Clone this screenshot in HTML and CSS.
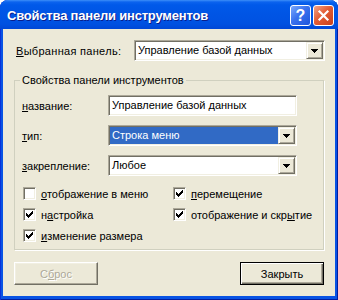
FILE: index.html
```html
<!DOCTYPE html>
<html lang="ru">
<head>
<meta charset="utf-8">
<title>Свойства панели инструментов</title>
<link rel="stylesheet" href="styles.css">
</head>
<body>
<div class="window">
  <div class="titlebar">
    <span class="title">Свойства панели инструментов</span>
    <span class="tb-btn tb-help">?</span>
    <span class="tb-btn tb-close">
      <svg width="13" height="13" viewBox="0 0 13 13"><path d="M2.5 2.5 L10.5 10.5 M10.5 2.5 L2.5 10.5" stroke="#fff" stroke-width="2.2" stroke-linecap="square"/></svg>
    </span>
  </div>
  <div class="client">
    <div class="top-row">
      <span class="top-label"><u>В</u>ыбранная панель:</span>
      <div class="combo wide">
        <span class="combo-text">Управление базой данных</span>
        <span class="drop"><svg width="7" height="4" viewBox="0 0 7 4" shape-rendering="crispEdges"><rect x="0" y="0" width="7" height="1"/><rect x="1" y="1" width="5" height="1"/><rect x="2" y="2" width="3" height="1"/><rect x="3" y="3" width="1" height="1"/></svg></span>
      </div>
    </div>

    <fieldset class="group">
      <legend>Свойства панели инструментов</legend>
      <div class="fields">
        <span class="field-label"><u>н</u>азвание:</span>
        <div class="edit">Управление базой данных</div>

        <span class="field-label"><u>т</u>ип:</span>
        <div class="combo">
          <span class="combo-text selected">Строка меню</span>
          <span class="drop"><svg width="7" height="4" viewBox="0 0 7 4" shape-rendering="crispEdges"><rect x="0" y="0" width="7" height="1"/><rect x="1" y="1" width="5" height="1"/><rect x="2" y="2" width="3" height="1"/><rect x="3" y="3" width="1" height="1"/></svg></span>
        </div>

        <span class="field-label"><u>з</u>акрепление:</span>
        <div class="combo">
          <span class="combo-text">Любое</span>
          <span class="drop"><svg width="7" height="4" viewBox="0 0 7 4" shape-rendering="crispEdges"><rect x="0" y="0" width="7" height="1"/><rect x="1" y="1" width="5" height="1"/><rect x="2" y="2" width="3" height="1"/><rect x="3" y="3" width="1" height="1"/></svg></span>
        </div>
      </div>

      <div class="checks">
        <div class="check"><span class="box"></span><span><u>о</u>тображение в меню</span></div>
        <div class="check"><span class="box"><svg width="11" height="11" viewBox="0 0 11 11" shape-rendering="crispEdges"><rect x="2" y="4" width="1" height="3"/><rect x="3" y="5" width="1" height="3"/><rect x="4" y="6" width="1" height="3"/><rect x="5" y="5" width="1" height="3"/><rect x="6" y="4" width="1" height="3"/><rect x="7" y="3" width="1" height="3"/><rect x="8" y="2" width="1" height="3"/></svg></span><span><u>п</u>еремещение</span></div>
        <div class="check"><span class="box"><svg width="11" height="11" viewBox="0 0 11 11" shape-rendering="crispEdges"><rect x="2" y="4" width="1" height="3"/><rect x="3" y="5" width="1" height="3"/><rect x="4" y="6" width="1" height="3"/><rect x="5" y="5" width="1" height="3"/><rect x="6" y="4" width="1" height="3"/><rect x="7" y="3" width="1" height="3"/><rect x="8" y="2" width="1" height="3"/></svg></span><span>н<u>а</u>стройка</span></div>
        <div class="check"><span class="box"><svg width="11" height="11" viewBox="0 0 11 11" shape-rendering="crispEdges"><rect x="2" y="4" width="1" height="3"/><rect x="3" y="5" width="1" height="3"/><rect x="4" y="6" width="1" height="3"/><rect x="5" y="5" width="1" height="3"/><rect x="6" y="4" width="1" height="3"/><rect x="7" y="3" width="1" height="3"/><rect x="8" y="2" width="1" height="3"/></svg></span><span>отображение и скр<u>ы</u>тие</span></div>
        <div class="check"><span class="box"><svg width="11" height="11" viewBox="0 0 11 11" shape-rendering="crispEdges"><rect x="2" y="4" width="1" height="3"/><rect x="3" y="5" width="1" height="3"/><rect x="4" y="6" width="1" height="3"/><rect x="5" y="5" width="1" height="3"/><rect x="6" y="4" width="1" height="3"/><rect x="7" y="3" width="1" height="3"/><rect x="8" y="2" width="1" height="3"/></svg></span><span><u>и</u>зменение размера</span></div>
      </div>
    </fieldset>

    <div class="buttons">
      <button class="btn disabled">С<u>б</u>рос</button>
      <button class="btn default">Закрыть</button>
    </div>
  </div>
</div>
</body>
</html>
```

FILE: styles.css
```css
* { box-sizing: border-box; }
html, body { margin: 0; padding: 0; background: #ffffff; }
body {
  font-family: "Liberation Sans", Arial, sans-serif;
  font-size: 11px;
  color: #000;
}
u { text-decoration: underline; text-underline-offset: 1px; }

.window {
  width: 338px;
  height: 300px;
  background: #0853e4;
  border-radius: 8px 8px 0 0;
  padding: 0 3px 4px 3px;
  display: flex;
  flex-direction: column;
  box-shadow: inset 1px 0 0 #0831d9, inset -1px 0 0 #001ea0, inset 0 -1px 0 #001ea0;
}

.titlebar {
  height: 29px;
  margin: 0 -3px;
  padding: 5px 4px 0 7px;
  display: flex;
  align-items: flex-start;
  border-radius: 8px 8px 0 0;
  background: linear-gradient(#3d8ff8 0px, #0b63ee 2px, #0059e9 5px, #0055e5 14px, #0051e1 24px, #0047d6 29px);
}
.title {
  flex: 1;
  font-family: "Liberation Sans", Arial, sans-serif;
  font-weight: bold;
  font-size: 13px;
  letter-spacing: -0.2px;
  line-height: 21px;
  color: #fff;
  text-shadow: 1px 1px 0 #0a1e8c;
  white-space: nowrap;
}
.tb-btn {
  width: 21px;
  height: 21px;
  border: 1px solid #fff;
  border-radius: 3px;
  margin-left: 2px;
  display: flex;
  align-items: center;
  justify-content: center;
}
.tb-help {
  background: linear-gradient(135deg, #7aa8fb 0%, #3a72ee 45%, #1d55dc 100%);
  color: #fff;
  font-family: "Liberation Sans", Arial, sans-serif;
  font-weight: bold;
  font-size: 16px;
  line-height: 19px;
}
.tb-close {
  background: linear-gradient(135deg, #f2a488 0%, #e35d35 45%, #c9401c 100%);
}

.client {
  flex: 1;
  background: #ece9d8;
  padding: 0 10px 0 11px;
}

.top-row {
  display: flex;
  align-items: center;
  margin-top: 11px;
  height: 21px;
}
.top-label {
  width: 120px;
  padding-left: 2px;
  letter-spacing: 0.3px;
  white-space: nowrap;
}

.combo, .edit {
  height: 21px;
  background: #fff;
  border: 1px solid;
  border-color: #aca899 #ffffff #ffffff #aca899;
  box-shadow: inset 1px 1px 0 #716f64, inset -1px -1px 0 #f1efe2;
  padding: 1px;
}
.combo { display: flex; }
.combo.wide { width: 191px; }
.combo-text {
  flex: 1;
  line-height: 17px;
  padding-left: 2px;
  white-space: nowrap;
}
.combo-text.selected {
  background: #316ac5;
  color: #fff;
}
.drop {
  width: 17px;
  height: 17px;
  background: #ece9d8;
  border: 1px solid;
  border-color: #f1efe2 #716f64 #716f64 #f1efe2;
  box-shadow: inset 1px 1px 0 #fff, inset -1px -1px 0 #aca899;
  display: flex;
  align-items: center;
  justify-content: center;
}
.drop svg { fill: #000; }

.edit {
  line-height: 17px;
  padding-left: 3px;
  white-space: nowrap;
}

.group {
  margin: 13px 1px 0 0;
  padding: 9px 0 7px 7px;
  border: 1px solid #d0d0bf;
  box-shadow: 1px 1px 0 #ffffff;
}
.group legend {
  padding: 0 2px;
  margin-left: -2px;
  line-height: 12px;
}

.fields {
  display: grid;
  grid-template-columns: 86px 189px;
  grid-auto-rows: 21px;
  row-gap: 9px;
  align-items: center;
}
.field-label { white-space: nowrap; }

.checks {
  display: grid;
  grid-template-columns: 150px auto;
  grid-auto-rows: 13px;
  row-gap: 8px;
  margin-top: 11px;
  padding-left: 1px;
}
.check {
  display: flex;
  align-items: center;
  height: 13px;
  white-space: nowrap;
}
.box {
  width: 13px;
  height: 13px;
  flex: none;
  margin-right: 5px;
  background: #fff;
  border: 1px solid;
  border-color: #aca899 #ffffff #ffffff #aca899;
  box-shadow: inset 1px 1px 0 #716f64, inset -1px -1px 0 #f1efe2;
}
.box svg { display: block; fill: #000; }

.buttons {
  display: flex;
  justify-content: space-between;
  margin-top: 12px;
  padding-right: 1px;
}
.btn {
  width: 84px;
  height: 23px;
  padding: 0;
  font-family: "Liberation Sans", Arial, sans-serif;
  font-size: 11px;
  color: #000;
  background: #ece9d8;
  border: 1px solid;
  border-color: #ffffff #716f64 #716f64 #ffffff;
  box-shadow: inset -1px -1px 0 #aca899, inset 1px 1px 0 #f1efe2;
}
.btn.default {
  border-color: #000;
  box-shadow: inset 1px 1px 0 #fff, inset -1px -1px 0 #716f64, inset -2px -2px 0 #aca899;
}
.btn.disabled {
  color: #aca899;
  text-shadow: 1px 1px 0 #fff;
}
```
